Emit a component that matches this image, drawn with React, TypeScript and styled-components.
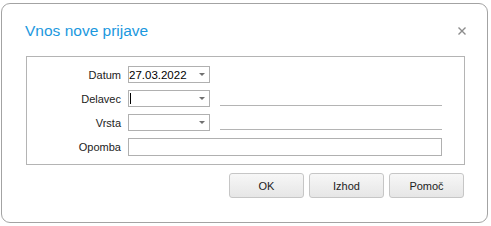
import React from 'react'
import styled, { createGlobalStyle } from 'styled-components'

const GlobalStyle = createGlobalStyle`
  html, body {
    margin: 0;
    padding: 0;
    background: #ffffff;
  }
  body {
    font-family: 'Liberation Sans', Arial, sans-serif;
    font-size: 11px;
    color: #000;
  }
`

type Row = {
  label: string
  kind: 'combo' | 'text'
  value?: string
  caret?: boolean
  line?: boolean
}

const rows: Row[] = [
  { label: 'Datum', kind: 'combo', value: '27.03.2022' },
  { label: 'Delavec', kind: 'combo', caret: true, line: true },
  { label: 'Vrsta', kind: 'combo', line: true },
  { label: 'Opomba', kind: 'text' },
]

const App: React.FC = () => {
  return (
    <Page>
      <GlobalStyle />
      <Dialog>
        <Header>
          <Title>Vnos nove prijave</Title>
          <Close aria-label="Zapri">
            <svg width="8" height="8" viewBox="0 0 8 8">
              <path d="M0.5 0.5 L7.5 7.5 M7.5 0.5 L0.5 7.5" stroke="#8c8c8c" strokeWidth="1.4" />
            </svg>
          </Close>
        </Header>

        <FormBox>
          {rows.map((row) => (
            <React.Fragment key={row.label}>
              <Label>{row.label}</Label>
              {row.kind === 'combo' ? (
                <>
                  <Combo>
                    <ComboValue>
                      {row.value}
                      {row.caret && <Caret />}
                    </ComboValue>
                    <Arrow />
                  </Combo>
                  {row.line ? <Underline /> : <span />}
                </>
              ) : (
                <TextInput />
              )}
            </React.Fragment>
          ))}
        </FormBox>

        <Buttons>
          <Button>OK</Button>
          <Button>Izhod</Button>
          <Button>Pomoč</Button>
        </Buttons>
      </Dialog>
    </Page>
  )
}

const Page = styled.div`
  padding: 3px 0 0 1px;
`

const Dialog = styled.div`
  box-sizing: border-box;
  width: 487px;
  height: 220px;
  border: 1px solid #a3a3a3;
  border-radius: 9px;
  background: #fff;
  padding: 0 22px 0 24px;
`

const Header = styled.div`
  display: flex;
  align-items: center;
  justify-content: space-between;
  height: 52px;
`

const Title = styled.div`
  color: #1b98de;
  font-size: 15.5px;
  margin-left: -1px;
  margin-top: 1px;
`

const Close = styled.div`
  display: flex;
  margin-right: -1px;
  margin-top: 2px;
`

const FormBox = styled.div`
  box-sizing: border-box;
  width: 439px;
  border: 1px solid #b4b4b4;
  padding: 9px 22px 8px 0;
  display: grid;
  grid-template-columns: 94px 82px 1fr;
  column-gap: 7px;
  row-gap: 7px;
  align-items: center;
`

const Label = styled.div`
  text-align: right;
  color: #222;
`

const Combo = styled.div`
  box-sizing: border-box;
  height: 17px;
  border: 1px solid #b0b0b0;
  display: flex;
  align-items: center;
  background: #fff;
`

const ComboValue = styled.div`
  flex: 1;
  font-size: 11.5px;
  display: flex;
  align-items: center;
  height: 100%;
`

const Caret = styled.span`
  display: block;
  width: 1px;
  height: 11px;
  background: #000;
  margin-left: 1px;
`

const Arrow = styled.span`
  width: 0;
  height: 0;
  border-left: 3px solid transparent;
  border-right: 3px solid transparent;
  border-top: 3px solid #707070;
  margin-right: 4px;
`

const Underline = styled.div`
  align-self: end;
  height: 1px;
  background: #b4b4b4;
  margin-left: 3px;
  margin-bottom: 1px;
`

const TextInput = styled.div`
  grid-column: 2 / 4;
  box-sizing: border-box;
  height: 18px;
  border: 1px solid #b0b0b0;
`

const Buttons = styled.div`
  display: flex;
  justify-content: flex-end;
  gap: 5px;
  width: 438px;
  margin-top: 8px;
`

const Button = styled.button`
  box-sizing: border-box;
  width: 75px;
  height: 25px;
  border: 1px solid #c6c6c6;
  border-radius: 3px;
  background: linear-gradient(#f7f7f7, #e6e6e6);
  font-family: 'Liberation Sans', Arial, sans-serif;
  font-size: 11px;
  color: #222;
  padding: 0;
`

export default App
